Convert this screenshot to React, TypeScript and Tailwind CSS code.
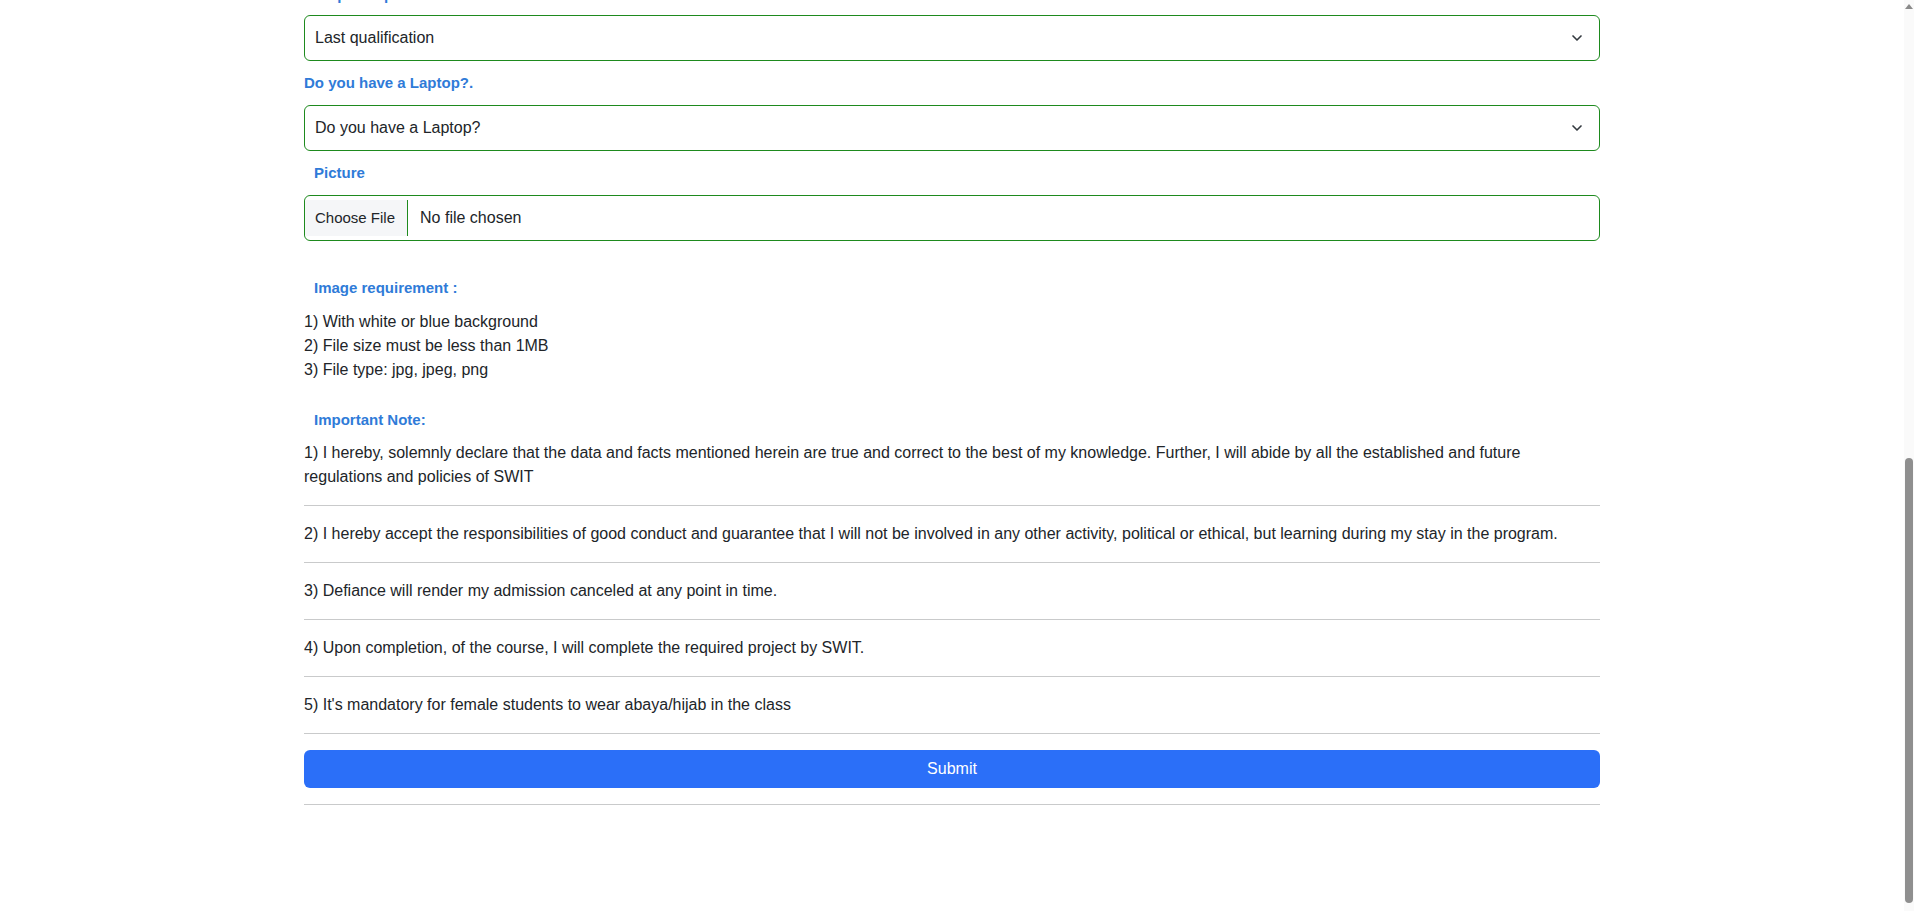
import React from 'react';
import { ChevronDown } from 'lucide-react';

const notes = [
  'I hereby accept the responsibilities of good conduct and guarantee that I will not be involved in any other activity, political or ethical, but learning during my stay in the program.',
  'Defiance will render my admission canceled at any point in time.',
  'Upon completion, of the course, I will complete the required project by SWIT.',
  "It's mandatory for female students to wear abaya/hijab in the class",
];

function SelectBox({ text }: { text: string }) {
  return (
    <div className="flex h-[46px] items-center justify-between rounded-md border border-[#1e8a1e] bg-white pl-[10px] pr-[14px] text-[16px] text-[#212529]">
      <span>{text}</span>
      <ChevronDown className="h-4 w-4 text-[#343a40]" strokeWidth={2.5} />
    </div>
  );
}

function Label({ text, indent }: { text: string; indent?: boolean }) {
  return (
    <div className={`h-6 text-[15px] font-bold leading-6 text-[#2f7bd8] ${indent ? 'pl-[10px]' : ''}`}>{text}</div>
  );
}

export default function App() {
  return (
    <div className="relative h-[911px] overflow-hidden bg-white font-['Liberation_Sans',sans-serif] text-[#212529]">
      <div className="pr-[10px]">
        <div className="mx-auto mt-[-17px] w-[1296px]">
          <Label text="Computer qualification" />
          <div className="mt-2">
            <SelectBox text="Last qualification" />
          </div>

          <div className="my-[10px]">
            <Label text="Do you have a Laptop?." />
          </div>
          <SelectBox text="Do you have a Laptop?" />

          <div className="my-[10px]">
            <Label text="Picture" indent />
          </div>
          <div className="flex h-[46px] items-stretch overflow-hidden rounded-md border border-[#1e8a1e] bg-white text-[15px]">
            <div className="my-[4px] flex items-center border-r border-[#1e8a1e] bg-[#f5f6f8] pl-[10px] pr-[12px]">Choose File</div>
            <div className="flex items-center pl-[12px] text-[16px]">No file chosen</div>
          </div>

          <div className="mt-[35px]">
            <Label text="Image requirement :" indent />
          </div>
          <div className="mt-[10px] text-[16px] leading-6">
            <div>1) With white or blue background</div>
            <div>2) File size must be less than 1MB</div>
            <div>3) File type: jpg, jpeg, png</div>
          </div>

          <div className="mt-[26px]">
            <Label text="Important Note:" indent />
          </div>
          <p className="mt-[9px] pr-[70px] text-[16px] leading-6">
            1) I hereby, solemnly declare that the data and facts mentioned herein are true and correct to the best of my knowledge. Further, I will abide by all the established and future regulations and policies of SWIT
          </p>
          {notes.map((n, i) => (
            <div key={i}>
              <hr className="my-4 border-t border-[#c9cacb]" />
              <p className="text-[16px] leading-6">
                {i + 2}) {n}
              </p>
            </div>
          ))}
          <hr className="my-4 border-t border-[#c9cacb]" />
          <button className="flex h-[38px] w-full items-center justify-center rounded-md bg-[#2b6ff8] text-[16px] text-white">
            Submit
          </button>
          <hr className="my-4 border-t border-[#c9cacb]" />
        </div>
      </div>

      {/* fake scrollbar */}
      <div className="absolute right-0 top-0 h-full w-[10px] bg-[#fafafa]">
        <div className="mx-auto mt-[4px] h-0 w-0 border-x-[4px] border-b-[5px] border-x-transparent border-b-[#8a8a8a]" />
        <div className="absolute bottom-[8px] left-[1px] right-[1px] top-[458px] rounded-full bg-[#8f8f8f]" />
      </div>
    </div>
  );
}
